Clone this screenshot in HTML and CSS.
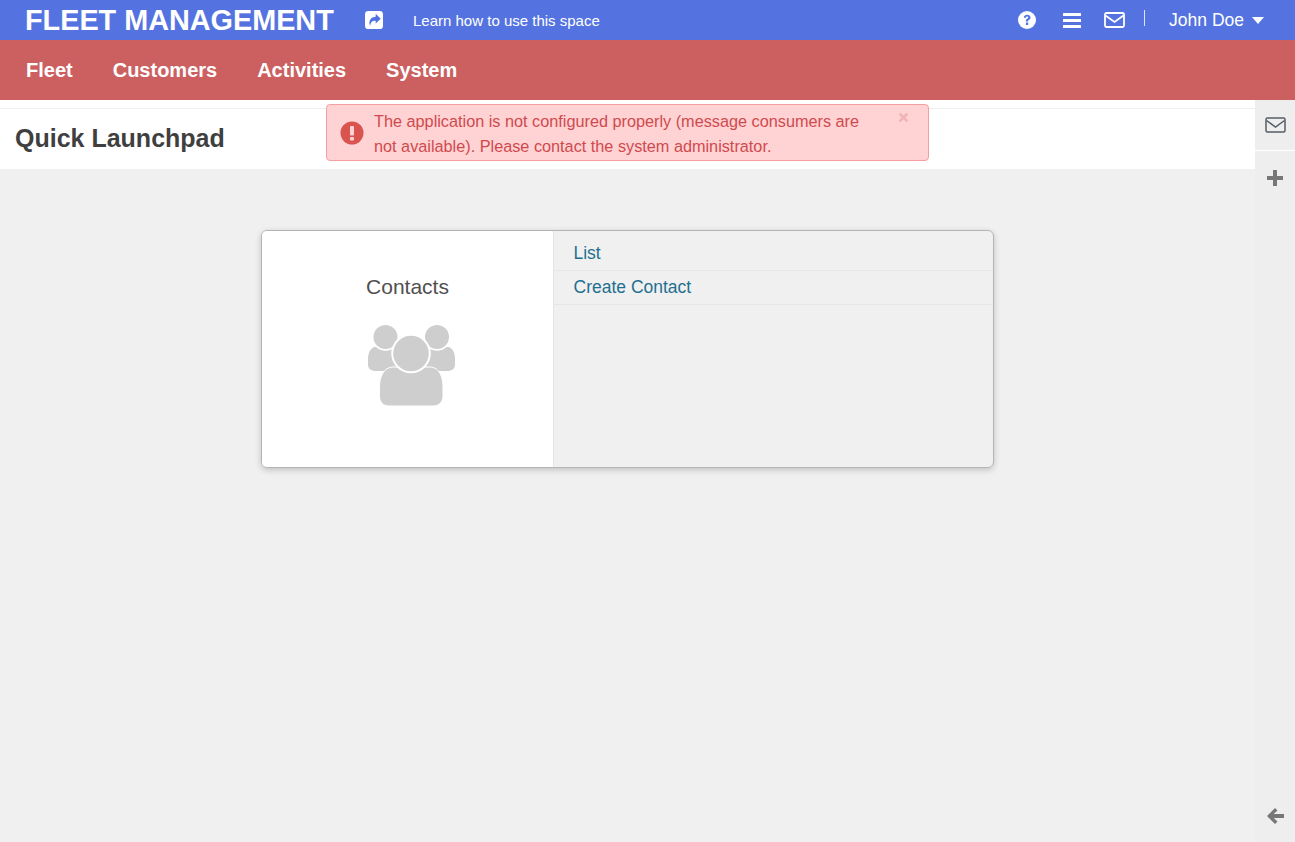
FILE: index.html
```html
<!DOCTYPE html>
<html lang="en">
<head>
<meta charset="UTF-8">
<meta name="viewport" content="width=device-width, initial-scale=1.0">
<title>Fleet Management</title>
<link rel="stylesheet" href="styles.css">
</head>
<body>
<header class="topbar">
  <div class="brand">FLEET MANAGEMENT</div>
  <svg class="share-icon" viewBox="0 0 16 16"><rect width="16" height="16" rx="3" fill="#fff"/><path d="M9.5 2.5 L14 6.8 L9.5 11 V8.8 C7 8.6 5.2 9.4 4.6 13.2 C2.6 8.5 5.4 5.1 9.5 5 Z" fill="#5473e0"/></svg>
  <a class="learn">Learn how to use this space</a>
  <div class="top-icons">
    <svg class="icon-help" viewBox="0 0 18 18"><circle cx="9" cy="9" r="9" fill="#fff"/><path d="M5.8 6.6 C6 4.6 7.5 3.7 9.2 3.7 C11 3.7 12.5 4.9 12.5 6.5 C12.5 8 11.5 8.5 10.6 9.1 C10.1 9.5 10.2 9.9 10.2 10.5 H7.9 C7.8 9.3 8 8.5 9 7.8 C9.7 7.3 10.2 7.1 10.2 6.5 C10.2 6 9.7 5.6 9.1 5.6 C8.4 5.6 8 6 7.7 6.9 Z M7.9 11.5 H10.2 V13.9 H7.9 Z" fill="#5473e0"/></svg>
    <svg class="icon-bars" viewBox="0 0 18 15"><g fill="#fff"><rect width="18" height="3" rx=".6"/><rect y="6" width="18" height="3" rx=".6"/><rect y="12" width="18" height="3" rx=".6"/></g></svg>
    <svg class="icon-mail" viewBox="0 0 21 16"><rect x="1" y="1" width="19" height="14" rx="1.5" fill="none" stroke="#fff" stroke-width="1.8"/><path d="M1.5 3.5 L10.5 10 L19.5 3.5" fill="none" stroke="#fff" stroke-width="1.8"/></svg>
    <span class="divider"></span>
    <span class="user">John Doe</span>
    <span class="caret"></span>
  </div>
</header>

<nav class="mainnav">
  <a>Fleet</a>
  <a>Customers</a>
  <a>Activities</a>
  <a>System</a>
</nav>

<div class="layout">
  <main class="content">
    <div class="page-title"><h1>Quick Launchpad</h1></div>
    <section class="launch-card">
      <div class="launch-left">
        <h3>Contacts</h3>
        <svg class="users-icon" viewBox="0 0 87 81">
          <g fill="#cecece">
            <path d="M6 22 C2 24 0 28 0 34 V39 C0 44 3 46 8 46 H30 V22 Z"/>
            <path d="M81 22 C85 24 87 28 87 34 V39 C87 44 84 46 79 46 H57 V22 Z"/>
            <circle cx="17.500" cy="12" r="13.800" fill="#fff"/>
            <circle cx="69" cy="12" r="13.800" fill="#fff"/>
            <circle cx="17.500" cy="12" r="12"/>
            <circle cx="69" cy="12" r="12"/>
            <path d="M11.500 62 C11.500 51 16 43 24 42 H63 C71 43 75 51 75 62 V71 C75 77 71 81 65 81 H21 C15 81 11.500 77 11.500 71 Z" stroke="#fff" stroke-width="1"/>
            <circle cx="43" cy="28.500" r="19.800" fill="#fff"/>
            <circle cx="43" cy="28.500" r="17.800"/>
          </g>
        </svg>
      </div>
      <ul class="launch-links">
        <li><a>List</a></li>
        <li><a>Create Contact</a></li>
      </ul>
    </section>
  </main>
  <aside class="sidebar">
    <div class="side-btn">
      <svg class="side-mail" viewBox="0 0 21 16"><rect x="1" y="1" width="19" height="14" rx="1.5" fill="none" stroke="#555d66" stroke-width="1.500"/><path d="M1.500 3.500 L10.500 10 L19.500 3.500" fill="none" stroke="#555d66" stroke-width="1.500"/></svg>
    </div>
    <div class="side-btn">
      <svg class="side-plus" viewBox="0 0 16 16"><path d="M6 0 H10 V6 H16 V10 H10 V16 H6 V10 H0 V6 H6 Z" fill="#777"/></svg>
    </div>
    <div class="side-bottom">
      <svg class="side-arrow" viewBox="0 0 17 16"><path d="M8 0 L10.500 2.500 L6.700 6 H17 V10 H6.700 L10.500 13.500 L8 16 L0 8 Z" fill="#777"/></svg>
    </div>
  </aside>
</div>

<div class="alert">
  <svg class="alert-icon" viewBox="0 0 24 24"><circle cx="12" cy="12" r="11.500" fill="#d9534f"/><rect x="10" y="5" width="4" height="9.500" rx="1" fill="#ffd2d4"/><rect x="10" y="16" width="4" height="3.500" rx="1" fill="#ffd2d4"/></svg>
  <p>The application is not configured properly (message consumers are not available). Please contact the system administrator.</p>
  <svg class="alert-close" viewBox="0 0 10 10"><path d="M1.500 1.500 L8.500 8.500 M8.500 1.500 L1.500 8.500" stroke="#eeb4b6" stroke-width="2.400"/></svg>
</div>
</body>
</html>
```

FILE: styles.css
```css
* {
  box-sizing: border-box;
}
html, body {
  height: 100%;
}
body {
  margin: 0;
  font-family: "Liberation Sans", Arial, sans-serif;
  background-color: #f0f0f0;
  display: flex;
  flex-direction: column;
  overflow: hidden;
}
.topbar {
  height: 40px;
  flex: none;
  background-color: #5473e0;
  color: #fff;
  display: flex;
  align-items: center;
  padding-left: 25px;
}
.brand {
  font-size: 28.800px;
  font-weight: bold;
  width: 340px;
}
.share-icon {
  width: 18px;
  height: 18px;
}
.learn {
  font-size: 15px;
  margin-left: 30px;
}
.top-icons {
  margin-left: auto;
  display: flex;
  align-items: center;
  padding-right: 31px;
}
.icon-help {
  width: 18px;
  height: 18px;
}
.icon-bars {
  width: 18px;
  height: 15px;
  margin-left: 27px;
}
.icon-mail {
  width: 21px;
  height: 16px;
  margin-left: 23px;
}
.divider {
  width: 1px;
  height: 16px;
  background-color: #dfe4f8;
  margin: -4px 24px 0 19px;
}
.user {
  font-size: 17.500px;
}
.caret {
  margin-left: 8px;
  border-left: 6.500px solid transparent;
  border-right: 6.500px solid transparent;
  border-top: 7px solid #fff;
}
.mainnav {
  height: 60px;
  flex: none;
  background-color: #cc6060;
  color: #fff;
  display: flex;
  align-items: center;
  gap: 40px;
  padding-left: 26px;
  font-size: 20px;
  font-weight: bold;
}
.layout {
  flex: 1;
  display: flex;
  min-height: 0;
}
.content {
  flex: 1;
  min-width: 0;
}
.page-title {
  height: 69px;
  padding-top: 8px;
  background-color: #fff;
}
.page-title h1 {
  margin: 0;
  padding: 0 15px;
  border-top: 1px solid #efefef;
  font-size: 25px;
  line-height: 59px;
  color: #3f3f3f;
}
.launch-card {
  width: 733px;
  height: 238px;
  margin: 61px 0 0 261px;
  display: flex;
  border: 1px solid #b4b4b4;
  border-radius: 6px;
  box-shadow: 0 2px 6px rgba(0, 0, 0, 0.2);
  overflow: hidden;
}
.launch-left {
  width: 292px;
  background-color: #fff;
  border-right: 1px solid #e6e6e6;
  display: flex;
  flex-direction: column;
  align-items: center;
  padding-top: 43px;
}
.launch-left h3 {
  margin: 0;
  font-size: 21px;
  font-weight: normal;
  line-height: 26px;
  color: #505050;
}
.users-icon {
  width: 87px;
  height: 81px;
  margin: 25px 0 0 8px;
}
.launch-links {
  flex: 1;
  margin: 0;
  padding: 0;
  list-style: none;
}
.launch-links li {
  height: 34px;
  padding-left: 19.500px;
  border-bottom: 1px solid #e6e6e6;
  font-size: 17.500px;
  line-height: 32px;
  color: #1f6f8f;
}
.launch-links li:first-child {
  height: 40px;
  line-height: 44px;
}
.sidebar {
  width: 40px;
  flex: none;
  background-color: #eee;
  display: flex;
  flex-direction: column;
}
.side-btn {
  height: 51px;
  border-bottom: 1px solid #fff;
  display: flex;
  align-items: center;
  justify-content: center;
}
.side-btn + .side-btn {
  height: 54px;
  border-bottom: 0;
}
.side-mail {
  width: 21px;
  height: 16px;
}
.side-plus {
  width: 16px;
  height: 16px;
}
.side-bottom {
  margin-top: auto;
  height: 52px;
  display: flex;
  align-items: center;
  justify-content: center;
}
.side-arrow {
  width: 17px;
  height: 16px;
}
.alert {
  position: absolute;
  left: 326px;
  top: 104px;
  width: 603px;
  height: 57px;
  background-color: #ffd2d4;
  border: 1px solid #f59fa2;
  border-radius: 4px;
  color: #d04a4d;
  display: flex;
  padding: 4px 0 0 13px;
}
.alert-icon {
  width: 24px;
  height: 24px;
  margin-top: 12px;
  flex: none;
}
.alert p {
  margin: 0 0 0 10px;
  width: 500px;
  font-size: 16.250px;
  line-height: 24.500px;
}
.alert-close {
  position: absolute;
  right: 19px;
  top: 7px;
  width: 11px;
  height: 11px;
}
```
